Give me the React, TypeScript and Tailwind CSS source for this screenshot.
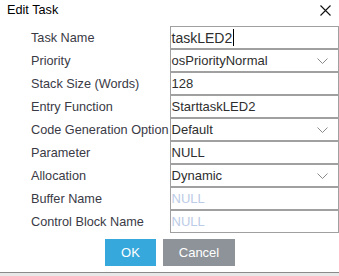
import React from "react";

const Chevron = () => (
  <svg width="11" height="7" viewBox="0 0 11 7" className="absolute right-[10px] top-[8px]">
    <path d="M0.5 0.5 L5.5 5.5 L10.5 0.5" fill="none" stroke="#8a8a8a" strokeWidth="1" />
  </svg>
);

type Row = { label: string; value: string; select?: boolean; placeholder?: boolean; cursor?: boolean };

const rows: Row[] = [
  { label: "Task Name", value: "taskLED2", cursor: true },
  { label: "Priority", value: "osPriorityNormal", select: true },
  { label: "Stack Size (Words)", value: "128" },
  { label: "Entry Function", value: "StarttaskLED2" },
  { label: "Code Generation Option", value: "Default", select: true },
  { label: "Parameter", value: "NULL" },
  { label: "Allocation", value: "Dynamic", select: true },
  { label: "Buffer Name", value: "NULL", placeholder: true },
  { label: "Control Block Name", value: "NULL", placeholder: true },
];

export default function App() {
  return (
    <div
      className="relative w-[339px] h-[276px] bg-white overflow-hidden"
      style={{ fontFamily: '"Liberation Sans", Arial, sans-serif' }}
    >
      <div className="flex items-center justify-between h-[26px] pl-[7px] pr-[8px]">
        <span className="text-[12.7px] text-black leading-none -mt-[5px]">Edit Task</span>
        <svg width="11" height="11" viewBox="0 0 11 11" className="-mt-[6px]">
          <path d="M0.5 0.5 L10.5 10.5 M10.5 0.5 L0.5 10.5" stroke="#111" strokeWidth="1.1" />
        </svg>
      </div>
      <div className="flex flex-col">
        {rows.map((r, i) => (
          <div key={i} className="flex h-[23px]">
            <div className="w-[170px] pl-[31px] text-[12.7px] text-[#3a3a46] leading-[23px] whitespace-nowrap overflow-hidden pt-[1px]">
              {r.label}
            </div>
            <div className="relative w-[170px] h-[23px] border border-[#a0a0a0] pl-[1px] flex items-center">
              <span
                className={`text-[13px] leading-none ${r.placeholder ? "text-[#bccbe6]" : "text-[#2e2e2e]"} ${r.cursor ? "text-[14px]" : ""}`}
              >
                {r.value}
              </span>
              {r.cursor && <span className="w-px h-[17px] bg-black ml-[1px]" />}
              {r.select && <Chevron />}
            </div>
          </div>
        ))}
      </div>
      <div className="flex justify-center gap-[7px] mt-[6px] pl-[1px]">
        <div className="w-[51px] h-[27px] bg-[#37a8dc] text-white text-[13px] flex items-center justify-center">
          OK
        </div>
        <div className="w-[72px] h-[27px] bg-[#8d9398] text-white text-[13px] flex items-center justify-center">
          Cancel
        </div>
      </div>
      <div className="absolute left-0 right-0 top-[272px] h-[4px] bg-[#e8e8e8] border-t border-[#8a8a8a]" />
    </div>
  );
}
